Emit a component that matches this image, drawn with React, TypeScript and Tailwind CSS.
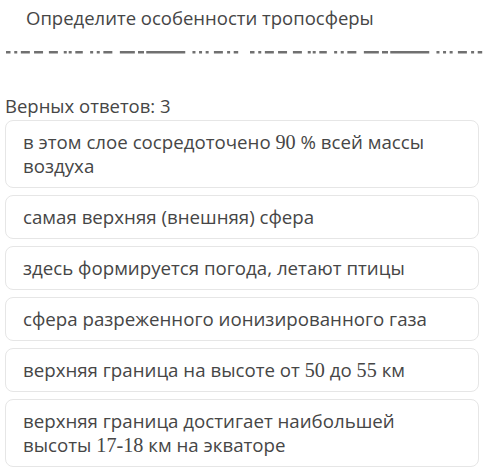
const Num = ({ children }: { children: React.ReactNode }) => (
  <span className="font-['Liberation_Serif',serif] text-[1.08em]">{children}</span>
);

const answers = [
  <>в этом слое сосредоточено <Num>90</Num> % всей массы воздуха</>,
  <>самая верхняя (внешняя) сфера</>,
  <>здесь формируется погода, летают птицы</>,
  <>сфера разреженного ионизированного газа</>,
  <>верхняя граница на высоте от <Num>50</Num> до <Num>55</Num> км</>,
  <>верхняя граница достигает наибольшей высоты <Num>17-18</Num> км на экваторе</>,
];

// clipped line of text under the title, only the bottom of the glyphs shows
const dashes: [number, number][] = [
  [0, 3], [5, 2], [9, 6], [17, 6], [26, 6], [35, 2], [38, 2], [42, 5],
  [51, 2], [55, 2], [59, 6], [69, 10], [80, 4], [85, 26], [113, 2], [117, 2],
  [121, 2], [126, 6], [134, 2], [138, 3],
];

const DashLine = () => (
  <svg width="478" height="3" viewBox="0 0 478 3" className="block">
    {[0, 244].map((off) =>
      dashes.map(([x, w], i) => (
        <rect key={`${off}-${i}`} x={off + x * 1.65} y="0" width={w * 1.5} height="2.5" fill="#707070" />
      )),
    )}
  </svg>
);

export default function App() {
  return (
    <div className="h-[473px] w-[500px] bg-white font-['Open_Sans',sans-serif] text-[#464646]">
      <div className="pl-[26px] pt-[3px] text-[18.5px] leading-[30px]">
        Определите особенности тропосферы
      </div>
      <div className="ml-[6px] mt-[18px]">
        <DashLine />
      </div>
      <div className="pl-[5px] pt-[40px] text-[18.5px] leading-[24px]">
        Верных ответов: 3
      </div>
      <div className="flex w-[479px] flex-col gap-[7px] pl-[5px] pt-[2px]">
        {answers.map((a, i) => (
          <div
            key={i}
            className="rounded-[8px] border border-[#e6e6e6] py-[9px] pl-[17px] pr-[40px] text-[18.7px] leading-[24px]"
          >
            {a}
          </div>
        ))}
      </div>
    </div>
  );
}
